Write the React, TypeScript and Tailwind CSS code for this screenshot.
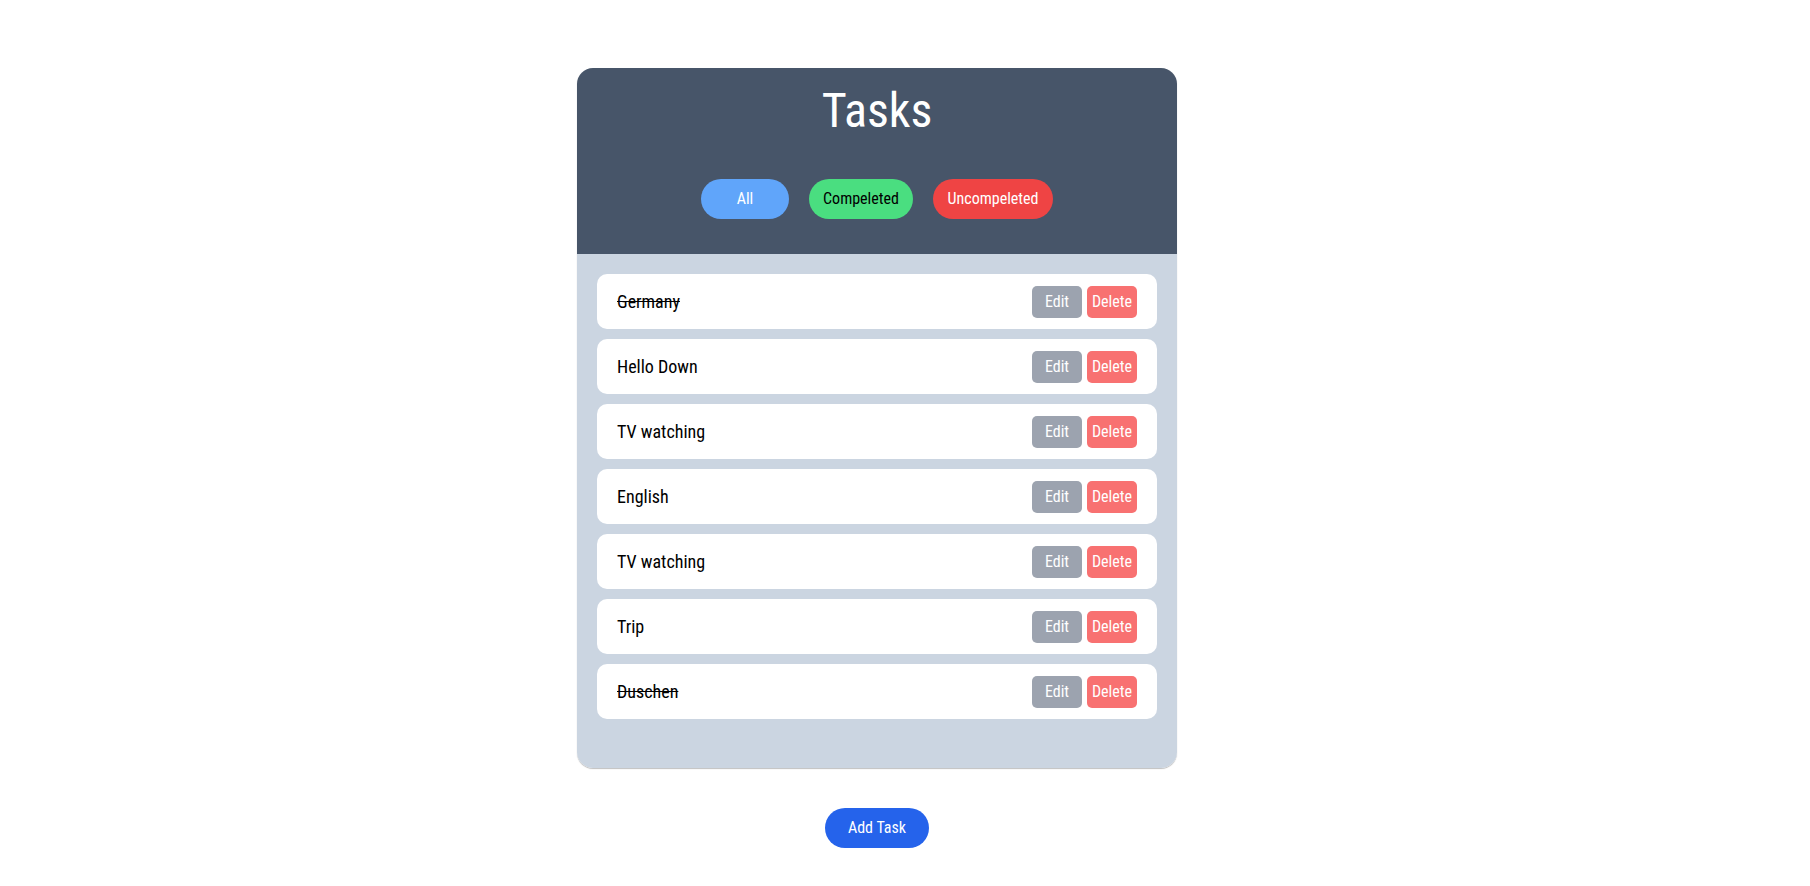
import React from "react";

const tasks = [
  { title: "Germany", done: true },
  { title: "Hello Down", done: false },
  { title: "TV watching", done: false },
  { title: "English", done: false },
  { title: "TV watching", done: false },
  { title: "Trip", done: false },
  { title: "Duschen", done: true },
];

export default function App() {
  return (
    <div
      className="min-h-screen bg-white flex flex-col items-center pt-[68px] pr-[56px] font-stretch-condensed"
      style={{ fontFamily: '"Roboto Condensed", Roboto, "Liberation Sans", sans-serif' }}
    >
      <div className="w-[600px] h-[700px] rounded-2xl overflow-hidden flex flex-col shadow-[0_1px_1px_rgba(0,0,0,0.25)]">
        <div className="h-[186px] bg-[#475569] flex flex-col items-center pt-[19px]">
          <h1 className="text-[48px] leading-[48px] font-normal text-white">Tasks</h1>
          <div className="mt-[44px] flex gap-5">
            <button className="w-[88px] h-10 rounded-full bg-[#60a5fa] text-white text-base">All</button>
            <button className="w-[104px] h-10 rounded-full bg-[#4ade80] text-black text-base">Compeleted</button>
            <button className="w-[120px] h-10 rounded-full bg-[#ef4444] text-white text-base">Uncompeleted</button>
          </div>
        </div>
        <div className="flex-1 bg-[#cbd5e1] p-5 flex flex-col gap-[10px]">
          {tasks.map((t, i) => (
            <div key={i} className="h-[55px] shrink-0 bg-white rounded-[10px] flex items-center justify-between px-5">
              <span className={"text-[18px] text-black " + (t.done ? "line-through" : "")}>{t.title}</span>
              <div className="flex gap-[5px]">
                <button className="w-[50px] h-8 rounded-[5px] bg-[#9ca3af] text-white text-base">Edit</button>
                <button className="w-[50px] h-8 rounded-[5px] bg-[#f87171] text-white text-base">Delete</button>
              </div>
            </div>
          ))}
        </div>
      </div>
      <button className="mt-10 w-[104px] h-10 rounded-full bg-[#2563eb] text-white text-base">Add Task</button>
    </div>
  );
}
